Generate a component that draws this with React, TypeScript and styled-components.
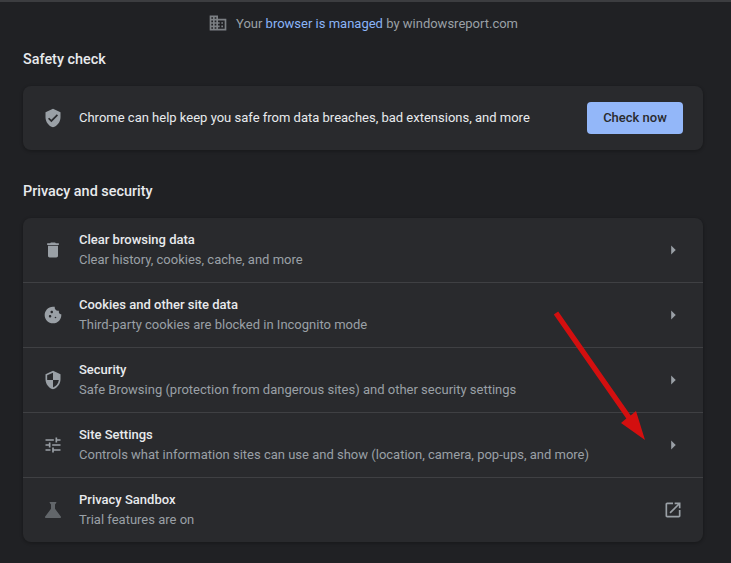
import React from 'react';
import styled, { createGlobalStyle } from 'styled-components';

const GlobalStyle = createGlobalStyle`
  html, body {
    margin: 0;
    padding: 0;
    background: #202124;
    overflow: hidden;
  }
`;

const Page = styled.div`
  position: relative;
  width: 731px;
  height: 563px;
  box-sizing: border-box;
  border-top: 2px solid #3c3d40;
  padding: 0 28px 0 23px;
  background: #202124;
  font-family: Roboto, "Liberation Sans", sans-serif;
  font-size: 13px;
  color: #e8eaed;
  overflow: hidden;
`;

const ManagedBar = styled.div`
  height: 42px;
  display: flex;
  align-items: center;
  justify-content: center;
  gap: 8px;
  color: #9aa0a6;
`;

const ManagedLink = styled.span`
  color: #8ab4f8;
`;

const Heading = styled.h2`
  margin: 0;
  padding-top: ${(p: { $top: number }) => p.$top}px;
  height: 39px;
  box-sizing: content-box;
  line-height: 26px;
  font-size: 14.4px;
  font-weight: 500;
  color: #e8eaed;
`;

const Card = styled.section`
  background: #292a2d;
  border-radius: 8px;
  box-shadow: 0 1px 3px 1px rgba(0, 0, 0, 0.2);
`;

const SafetyRow = styled.div`
  height: 64px;
  display: flex;
  align-items: center;
  padding: 0 20px;
  gap: 16px;
`;

const Grow = styled.div`
  flex: 1;
  min-width: 0;
`;

const SafetyText = styled(Grow)`
  padding-bottom: 2px;
`;

const CheckButton = styled.button`
  width: 96px;
  height: 32px;
  border: none;
  border-radius: 4px;
  background: #93b7f9;
  color: #292a2d;
  font-family: inherit;
  font-size: 13px;
  font-weight: 500;
  padding: 0 0 2px;
`;

const Row = styled.div`
  height: 65px;
  box-sizing: border-box;
  display: flex;
  align-items: center;
  padding: 0 20px;
  gap: 16px;
  border-top: 1px solid #3f4043;

  &:first-child {
    height: 64px;
    border-top: none;
  }
`;

const Title = styled.div`
  line-height: 20px;
  font-weight: 500;
  color: #e8eaed;
`;

const Subtitle = styled.div`
  line-height: 20px;
  color: #9aa0a6;
`;

const IconSvg = styled.svg`
  display: block;
  flex: none;
  fill: ${(p: { $color?: string }) => p.$color || '#9aa0a6'};
`;

const Arrow = styled.svg`
  position: absolute;
  left: 540px;
  top: 298px;
`;

const Icon = ({ d, box = '0 0 24 24', color }: { d: string; box?: string; color?: string }) => (
  <IconSvg viewBox={box} width={20} height={20} $color={color}>
    <path d={d} />
  </IconSvg>
);

const paths = {
  domain:
    'M12 7V3H2v18h20V7H12zM6 19H4v-2h2v2zm0-4H4v-2h2v2zm0-4H4V9h2v2zm0-4H4V5h2v2zm4 12H8v-2h2v2zm0-4H8v-2h2v2zm0-4H8V9h2v2zm0-4H8V5h2v2zm10 12h-8v-2h2v-2h-2v-2h2v-2h-2V9h8v10zm-2-8h-2v2h2v-2zm0 4h-2v2h2v-2z',
  verified:
    'M12 1L3 5v6c0 5.55 3.84 10.74 9 12 5.16-1.26 9-6.45 9-12V5l-9-4zm-2 16l-4-4 1.41-1.41L10 14.17l6.59-6.59L18 9l-8 8z',
  trash: 'M6 19c0 1.1.9 2 2 2h8c1.1 0 2-.9 2-2V7H6v12zM19 4h-3.5l-1-1h-5l-1 1H5v2h14V4z',
  cookie:
    'M21.95 10.99c-1.79-.03-3.7-1.95-2.68-4.22-2.97 1-5.78-1.59-5.19-4.56C7.11.74 2 6.41 2 12c0 5.52 4.48 10 10 10 5.89 0 10.54-5.08 9.95-11.01zM8.5 15c-.83 0-1.5-.67-1.5-1.5S7.67 12 8.5 12s1.5.67 1.5 1.5S9.33 15 8.5 15zm2-5C9.67 10 9 9.33 9 8.5S9.67 7 10.5 7s1.5.67 1.5 1.5-.67 1.5-1.5 1.5zm4.5 6c-.55 0-1-.45-1-1s.45-1 1-1 1 .45 1 1-.45 1-1 1z',
  security:
    'M12 1L3 5v6c0 5.55 3.84 10.74 9 12 5.16-1.26 9-6.45 9-12V5l-9-4zm0 10.99h7c-.53 4.12-3.28 7.79-7 8.94V12H5V6.3l7-3.11v8.8z',
  tune:
    'M3 17v2h6v-2H3zM3 5v2h10V5H3zm10 16v-2h8v-2h-8v-2h-2v6h2zM7 9v2H3v2h4v2h2V9H7zm14 4v-2H11v2h10zm-6-4h2V7h4V5h-4V3h-2v6z',
  flask:
    'M19.8 18.4L14 10.67V6.5l1.35-1.69c.26-.33.03-.81-.39-.81H9.04c-.42 0-.65.48-.39.81L10 6.5v4.17L4.2 18.4c-.49.66-.02 1.6.8 1.6h14c.82 0 1.29-.94.8-1.6z',
  open:
    'M19 19H5V5h7V3H5c-1.11 0-2 .9-2 2v14c0 1.1.89 2 2 2h14c1.1 0 2-.9 2-2v-7h-2v7zM14 3v2h3.59l-9.83 9.83 1.41 1.41L19 6.41V10h2V3h-7z',
  chevron: 'M10 7l5 5-5 5z',
};

const rows = [
  { icon: paths.trash, title: 'Clear browsing data', sub: 'Clear history, cookies, cache, and more' },
  { icon: paths.cookie, title: 'Cookies and other site data', sub: 'Third-party cookies are blocked in Incognito mode' },
  { icon: paths.security, title: 'Security', sub: 'Safe Browsing (protection from dangerous sites) and other security settings' },
  { icon: paths.tune, title: 'Site Settings', sub: 'Controls what information sites can use and show (location, camera, pop-ups, and more)' },
  { icon: paths.flask, iconBox: '2 2 20 20', iconColor: '#62666a', title: 'Privacy Sandbox', sub: 'Trial features are on', external: true },
];

export default function App() {
  return (
    <Page>
      <GlobalStyle />
      <ManagedBar>
        <Icon d={paths.domain} color="#7b7f83" />
        <span>
          Your <ManagedLink>browser is managed</ManagedLink> by windowsreport.com
        </span>
      </ManagedBar>

      <Heading $top={3}>Safety check</Heading>
      <Card>
        <SafetyRow>
          <Icon d={paths.verified} />
          <SafetyText>Chrome can help keep you safe from data breaches, bad extensions, and more</SafetyText>
          <CheckButton>Check now</CheckButton>
        </SafetyRow>
      </Card>

      <Heading $top={29}>Privacy and security</Heading>
      <Card>
        {rows.map((row) => (
          <Row key={row.title}>
            <Icon d={row.icon} box={row.iconBox} color={row.iconColor} />
            <Grow>
              <Title>{row.title}</Title>
              <Subtitle>{row.sub}</Subtitle>
            </Grow>
            {row.external ? <Icon d={paths.open} /> : <Icon d={paths.chevron} box="1 1 22 22" />}
          </Row>
        ))}
      </Card>

      <Arrow width="120" height="150" viewBox="0 0 120 150">
        <path d="M13.8 14.5 L18.2 11.5 L90.7 115.5 L96 111 L105 140 L81 123 L86.3 118.5 Z" fill="#d30f0f" />
      </Arrow>
    </Page>
  );
}
